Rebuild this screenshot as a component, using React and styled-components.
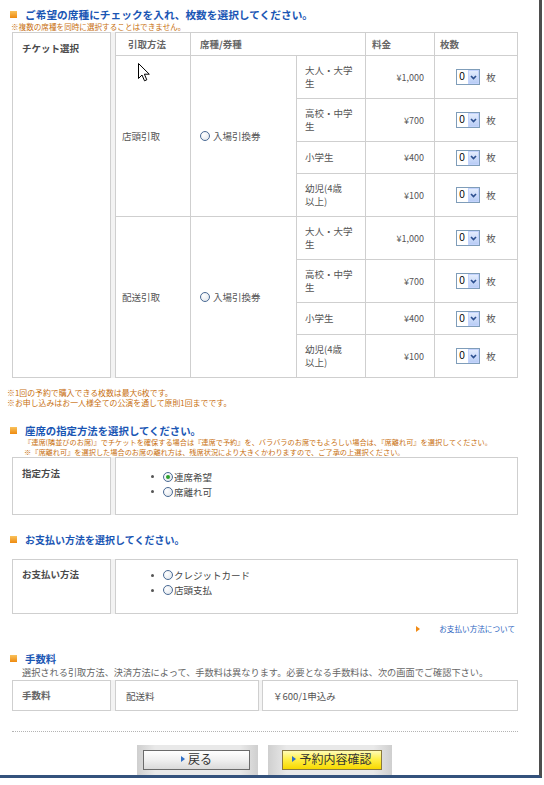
import React from "react";
import styled, { createGlobalStyle } from "styled-components";

const JP = `"Noto Sans CJK JP", "Noto Sans", sans-serif`;

const GlobalStyle = createGlobalStyle`
  html, body { margin: 0; padding: 0; background: #fff; }
  body { font-family: ${JP}; color: #555; }
  * { box-sizing: border-box; }
`;

const Frame = styled.div`
  position: relative;
  width: 542px;
  height: 778px;
  border-right: 3px solid #4e4e4e;
  border-bottom: 3px solid #34527c;
  overflow: hidden;
  padding-top: 8px;
  background: #fff;
  display: flex;
  flex-direction: column;
  align-items: flex-start;
`;

const Heading = styled.h2`
  margin: ${(p) => p.$mt || 0}px 0 0 10px;
  display: flex;
  align-items: center;
  gap: 8px;
  height: 13px;
  font-size: ${(p) => p.$fs || 10.4}px;
  font-weight: 700;
  color: #1a56b4;
  line-height: 13px;
  white-space: nowrap;
  &::before {
    content: "";
    width: 7px;
    height: 7px;
    background: linear-gradient(#f9c25c, #ee8a10);
  }
`;

const Note = styled.div`
  margin: ${(p) => p.$mt || 0}px 0 0 ${(p) => p.$ml || 11}px;
  font-size: ${(p) => p.$fs || 7.7}px;
  line-height: 10px;
  color: #c8700f;
  white-space: nowrap;
`;

const TicketTable = styled.div`
  display: flex;
  margin: 0 0 0 12px;
  width: 506px;
  background: #f3f3f3;
`;

const SideLabel = styled.div`
  width: 99px;
  margin-right: 4px;
  border: 1px solid #cfcfcf;
  background: #fff;
  padding: ${(p) => p.$pt ?? 9}px 0 0 9px;
  font-size: 9.5px;
  font-weight: 700;
  color: ${(p) => (p.$light ? "#666" : "#4a4a4a")};
  line-height: 13px;
  white-space: nowrap;
  ${(p) => (p.$center ? "display:flex;align-items:center;padding-top:0;" : "")}
`;

const Grid = styled.div`
  display: grid;
  grid-template-columns: 75px 106px 69px 69px 83px;
  grid-template-rows: 23px repeat(2, 43px 43px 32px 43px);
  border-left: 1px solid #cfcfcf;
  border-top: 1px solid #cfcfcf;
  background: #fff;
`;

const Cell = styled.div`
  border-right: 1px solid #cfcfcf;
  border-bottom: 1px solid #cfcfcf;
  display: flex;
  align-items: center;
  gap: ${(p) => p.$gap || 0}px;
  justify-content: ${(p) => p.$justify || "flex-start"};
  padding: 0 ${(p) => p.$pr || 0}px 0 ${(p) => p.$pl ?? 8}px;
  font-size: ${(p) => p.$fs || 9.5}px;
  font-weight: ${(p) => (p.$head ? 700 : 400)};
  line-height: 13px;
  color: ${(p) => (p.$head ? "#666" : "#555")};
  grid-row: span ${(p) => p.$rows || 1};
  grid-column: span ${(p) => p.$cols || 1};
  white-space: nowrap;
`;

const Radio = styled.span`
  flex-shrink: 0;
  width: 10px;
  height: 10px;
  border-radius: 50%;
  border: 1px solid #4a6a94;
  background: radial-gradient(circle at 35% 35%, #ffffff, #dde3ea);
  display: inline-flex;
  align-items: center;
  justify-content: center;
  &::after {
    content: "";
    width: 4px;
    height: 4px;
    border-radius: 50%;
    background: #2ca02c;
    display: ${(p) => (p.$checked ? "block" : "none")};
  }
`;

const RadioLabel = styled.span`
  display: inline-flex;
  align-items: center;
  gap: ${(p) => p.$gap ?? 3}px;
`;

const QtySelect = styled.span`
  display: inline-flex;
  width: 24px;
  height: 16px;
  border: 1px solid #7f9db9;
  background: #fff;
`;

const QtyValue = styled.span`
  flex: 1;
  font-family: "Liberation Sans", sans-serif;
  font-size: 10px;
  color: #000;
  line-height: 14px;
  padding-left: 2px;
`;

const QtyArrow = styled.span`
  width: 11px;
  display: flex;
  align-items: center;
  justify-content: center;
  background: linear-gradient(#e3ecfd, #b9cdf5);
  border: 1px solid #c3d3fd;
`;

const FormTable = styled.div`
  display: flex;
  margin: ${(p) => p.$mt || 0}px 0 0 12px;
  width: 506px;
  height: ${(p) => p.$h}px;
  background: #f3f3f3;
`;

const ValueCell = styled.div`
  flex: ${(p) => (p.$w ? "none" : 1)};
  width: ${(p) => (p.$w ? `${p.$w}px` : "auto")};
  margin-right: ${(p) => p.$mr || 0}px;
  border: 1px solid #cfcfcf;
  background: #fff;
  display: flex;
  align-items: center;
  padding-left: 10px;
  font-size: 9.5px;
  color: #555;
  white-space: nowrap;
`;

const ListCell = styled.div`
  flex: 1;
  border: 1px solid #cfcfcf;
  background: #fff;
`;

const OptionList = styled.ul`
  list-style: none;
  margin: 0;
  padding: ${(p) => p.$pt}px 0 0 35px;
`;

const Option = styled.li`
  display: flex;
  align-items: center;
  height: 15px;
  font-size: 9.5px;
  color: #444;
  white-space: nowrap;
  &::before {
    content: "";
    width: 3px;
    height: 3px;
    border-radius: 50%;
    background: #555;
    margin-right: 9px;
  }
`;

const HelpLink = styled.a`
  display: flex;
  justify-content: flex-end;
  align-items: center;
  gap: 19px;
  margin-top: 10px;
  width: 515px;
  height: 10px;
  font-size: 7.6px;
  line-height: 10px;
  color: #2a64c0;
  text-decoration: none;
  white-space: nowrap;
  &::before {
    content: "";
    border-left: 4px solid #f08a14;
    border-top: 3px solid transparent;
    border-bottom: 3px solid transparent;
  }
`;

const FeeText = styled.div`
  margin: 1px 0 0 22px;
  font-size: 9.2px;
  line-height: 12px;
  color: #666;
  white-space: nowrap;
`;

const Divider = styled.hr`
  margin: 20px 0 0 12px;
  width: 506px;
  height: 0;
  border: 0;
  border-top: 1px dotted #b4b4b4;
`;

const ButtonRow = styled.div`
  display: flex;
  gap: 10px;
  margin: 13px 0 0 137px;
`;

const ButtonWell = styled.div`
  display: flex;
  padding: 5px ${(p) => p.$pr}px 0 ${(p) => p.$pl}px;
  height: 30px;
  background: linear-gradient(90deg, #cfcfcf, #e9e9e9 15%, #e9e9e9 85%, #cfcfcf);
`;

const ActionButton = styled.button`
  display: flex;
  align-items: center;
  justify-content: center;
  gap: 3px;
  width: ${(p) => p.$w}px;
  height: 20px;
  padding: 0 0 2px;
  border: 1px solid ${(p) => (p.$primary ? "#8a7a40" : "#6b6b6b")};
  background: ${(p) =>
    p.$primary
      ? "linear-gradient(#fffcb8, #fff04a 45%, #f7d800)"
      : "linear-gradient(#ffffff, #f0f0f0 50%, #dadada)"};
  font-family: ${JP};
  font-size: 12px;
  color: #333;
  line-height: 1;
  &::before {
    content: "";
    border-left: 4px solid #2f6fc7;
    border-top: 3.5px solid transparent;
    border-bottom: 3.5px solid transparent;
  }
`;

const Cursor = styled.svg`
  position: absolute;
  left: 138px;
  top: 63px;
`;

const Chevron = () => (
  <svg width="7" height="5" viewBox="0 0 7 5">
    <path d="M1 1 L3.5 3.6 L6 1" fill="none" stroke="#2c4f8f" strokeWidth="1.6" />
  </svg>
);

const categories = [
  { lines: ["大人・大学", "生"], price: "¥1,000" },
  { lines: ["高校・中学", "生"], price: "¥700" },
  { lines: ["小学生"], price: "¥400" },
  { lines: ["幼児(4歳", "以上)"], price: "¥100" },
];

const groups = ["店頭引取", "配送引取"];

function Qty() {
  return (
    <QtySelect>
      <QtyValue>0</QtyValue>
      <QtyArrow>
        <Chevron />
      </QtyArrow>
    </QtySelect>
  );
}

export default function App() {
  return (
    <>
      <GlobalStyle />
      <Frame>
        <Heading $fs={10.7}>ご希望の席種にチェックを入れ、枚数を選択してください。</Heading>
        <Note $mt={1} $fs={7.6}>※複数の席種を同時に選択することはできません。</Note>

        <TicketTable>
          <SideLabel>チケット選択</SideLabel>
          <Grid>
            <Cell $head $pl={12}>引取方法</Cell>
            <Cell $head $cols={2} $pl={9}>席種/券種</Cell>
            <Cell $head $pl={6}>料金</Cell>
            <Cell $head $pl={5}>枚数</Cell>
            {groups.map((g) => (
              <React.Fragment key={g}>
                <Cell $rows={4} $pl={6}>{g}</Cell>
                <Cell $rows={4} $pl={9}>
                  <RadioLabel>
                    <Radio />
                    入場引換券
                  </RadioLabel>
                </Cell>
                {categories.map((c) => (
                  <React.Fragment key={c.price}>
                    <Cell $pl={8}>
                      <span>
                        {c.lines.map((l, i) => (
                          <React.Fragment key={l}>
                            {i > 0 && <br />}
                            {l}
                          </React.Fragment>
                        ))}
                      </span>
                    </Cell>
                    <Cell $justify="flex-end" $pr={10} $pl={0} $fs={9}>
                      {c.price}
                    </Cell>
                    <Cell $justify="center" $pl={0} $gap={6}>
                      <Qty />
                      <span>枚</span>
                    </Cell>
                  </React.Fragment>
                ))}
              </React.Fragment>
            ))}
          </Grid>
        </TicketTable>

        <Note $mt={10} $ml={7} $fs={7.9}>
          ※1回の予約で購入できる枚数は最大6枚です。
          <br />
          ※お申し込みはお一人様全ての公演を通して原則1回までです。
        </Note>

        <Heading $mt={16}>座席の指定方法を選択してください。</Heading>
        <Note $ml={24} $fs={7.2}>
          『連席(隣並びのお席)』でチケットを確保する場合は『連席で予約』を、バラバラのお席でもよろしい場合は、『席離れ可』を選択してください。
          <br />
          ※『席離れ可』を選択した場合のお席の離れ方は、残席状況により大きくかわりますので、ご了承の上選択ください。
        </Note>

        <FormTable $h={60}>
          <SideLabel $pt={9}>指定方法</SideLabel>
          <ListCell>
            <OptionList $pt={11}>
              <Option>
                <RadioLabel $gap={1}>
                  <Radio $checked />
                  連席希望
                </RadioLabel>
              </Option>
              <Option>
                <RadioLabel $gap={1}>
                  <Radio />
                  席離れ可
                </RadioLabel>
              </Option>
            </OptionList>
          </ListCell>
        </FormTable>

        <Heading $mt={18} $fs={10}>お支払い方法を選択してください。</Heading>
        <FormTable $mt={13} $h={58}>
          <SideLabel $pt={8}>お支払い方法</SideLabel>
          <ListCell>
            <OptionList $pt={8}>
              <Option>
                <RadioLabel $gap={1}>
                  <Radio />
                  クレジットカード
                </RadioLabel>
              </Option>
              <Option>
                <RadioLabel $gap={1}>
                  <Radio />
                  店頭支払
                </RadioLabel>
              </Option>
            </OptionList>
          </ListCell>
        </FormTable>

        <HelpLink href="#">お支払い方法について</HelpLink>

        <Heading $mt={18}>手数料</Heading>
        <FeeText>
          選択される引取方法、決済方法によって、手数料は異なります。必要となる手数料は、次の画面でご確認下さい。
        </FeeText>
        <FormTable $mt={2} $h={32}>
          <SideLabel $center $light>手数料</SideLabel>
          <ValueCell $w={144} $mr={3}>配送料</ValueCell>
          <ValueCell>￥600/1申込み</ValueCell>
        </FormTable>

        <Divider />

        <ButtonRow>
          <ButtonWell $pl={6} $pr={8}>
            <ActionButton $w={107}>戻る</ActionButton>
          </ButtonWell>
          <ButtonWell $pl={14} $pr={10}>
            <ActionButton $w={100} $primary>予約内容確認</ActionButton>
          </ButtonWell>
        </ButtonRow>

        <Cursor width="13" height="19" viewBox="0 0 13 19">
          <path
            d="M0.5 0.5 L0.5 15.5 L4 12 L6.5 17.8 L8.8 16.8 L6.4 11.2 L11.3 11.2 Z"
            fill="#fff"
            stroke="#000"
            strokeWidth="1"
            strokeLinejoin="round"
          />
        </Cursor>
      </Frame>
    </>
  );
}
